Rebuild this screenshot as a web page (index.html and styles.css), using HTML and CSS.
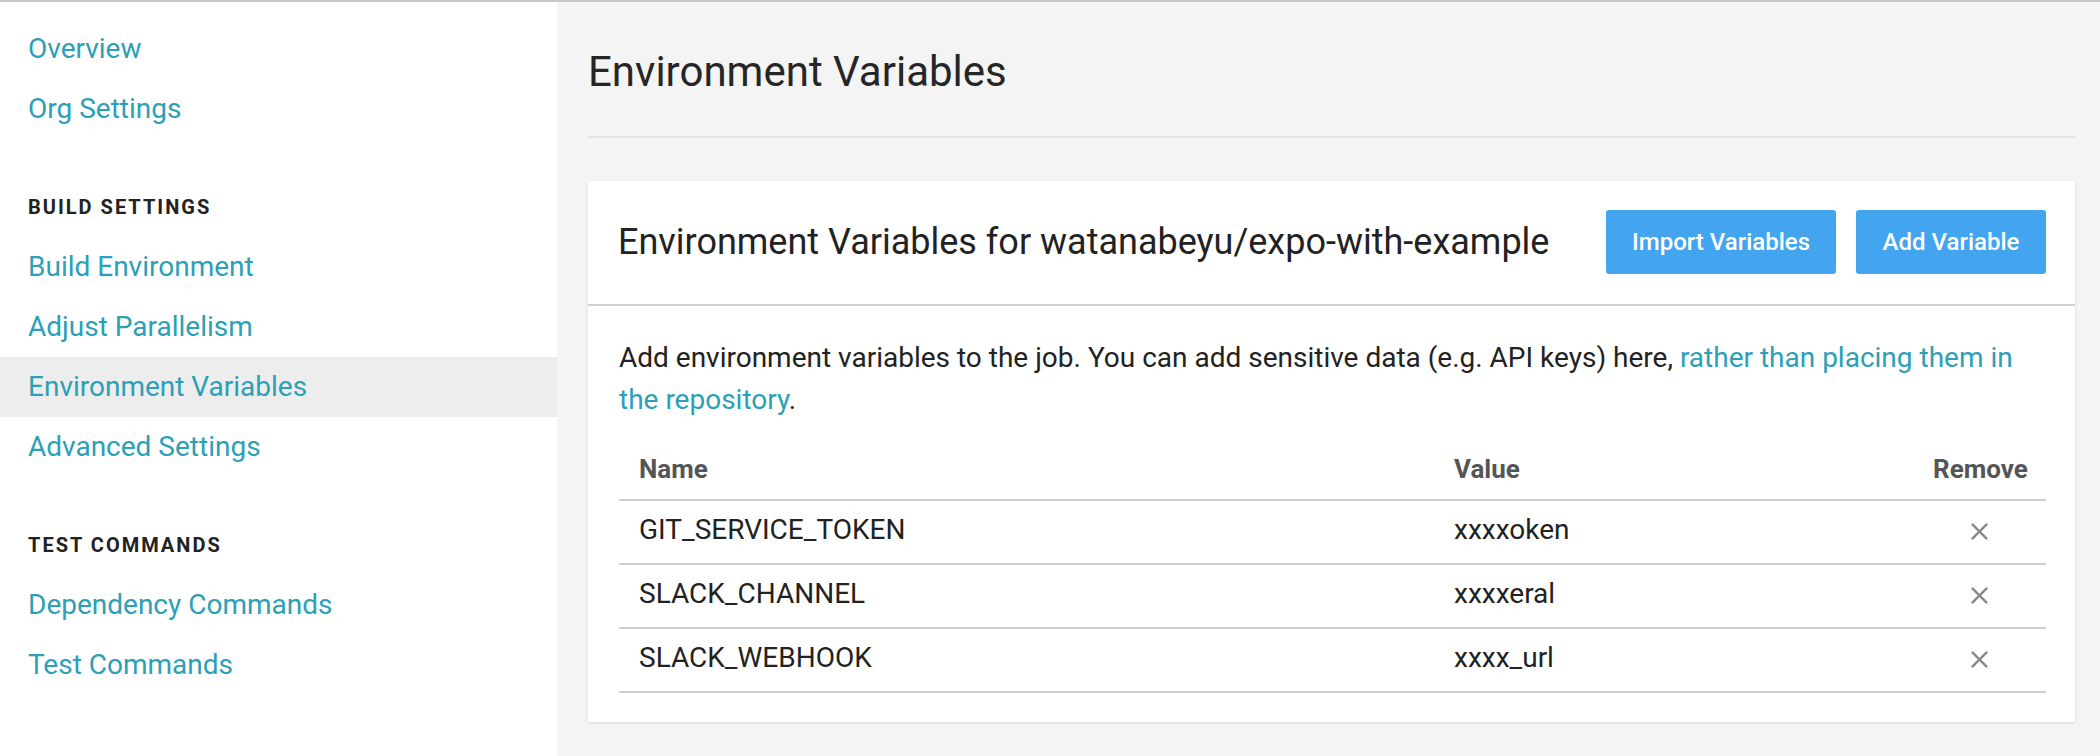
FILE: index.html
```html
<!DOCTYPE html>
<html lang="en">
<head>
<meta charset="utf-8">
<title>Environment Variables</title>
<link rel="stylesheet" href="styles.css">
</head>
<body>
<div class="page">
  <aside class="sidebar">
    <nav class="nav-group">
      <a class="nav-item" href="#">Overview</a>
      <a class="nav-item" href="#">Org Settings</a>
    </nav>
    <div class="nav-heading">BUILD SETTINGS</div>
    <nav class="nav-group">
      <a class="nav-item" href="#">Build Environment</a>
      <a class="nav-item" href="#">Adjust Parallelism</a>
      <a class="nav-item active" href="#">Environment Variables</a>
      <a class="nav-item" href="#">Advanced Settings</a>
    </nav>
    <div class="nav-heading">TEST COMMANDS</div>
    <nav class="nav-group">
      <a class="nav-item" href="#">Dependency Commands</a>
      <a class="nav-item" href="#">Test Commands</a>
    </nav>
  </aside>
  <main class="main">
    <h1 class="page-title">Environment Variables</h1>
    <hr class="divider">
    <section class="card">
      <header class="card-header">
        <h2 class="card-title">Environment Variables for watanabeyu/expo-with-example</h2>
        <div class="actions">
          <button class="btn btn-import">Import Variables</button>
          <button class="btn btn-add">Add Variable</button>
        </div>
      </header>
      <div class="card-body">
        <p class="intro">Add environment variables to the job. You can add sensitive data (e.g. API keys) here, <a href="#" class="link">rather than placing them in the repository</a>.</p>
        <table class="vars">
          <colgroup>
            <col class="col-name">
            <col class="col-value">
            <col class="col-remove">
          </colgroup>
          <thead>
            <tr><th>Name</th><th>Value</th><th class="center">Remove</th></tr>
          </thead>
          <tbody>
            <tr><td>GIT_SERVICE_TOKEN</td><td>xxxxoken</td><td class="center"><span class="remove"><svg viewBox="0 0 20 20" width="19" height="19"><path d="M2 2L18 18M18 2L2 18" stroke="#888" stroke-width="2.5" fill="none"/></svg></span></td></tr>
            <tr><td>SLACK_CHANNEL</td><td>xxxxeral</td><td class="center"><span class="remove"><svg viewBox="0 0 20 20" width="19" height="19"><path d="M2 2L18 18M18 2L2 18" stroke="#888" stroke-width="2.5" fill="none"/></svg></span></td></tr>
            <tr><td>SLACK_WEBHOOK</td><td>xxxx_url</td><td class="center"><span class="remove"><svg viewBox="0 0 20 20" width="19" height="19"><path d="M2 2L18 18M18 2L2 18" stroke="#888" stroke-width="2.5" fill="none"/></svg></span></td></tr>
          </tbody>
        </table>
      </div>
    </section>
  </main>
</div>
</body>
</html>
```

FILE: styles.css
```css
* { box-sizing: border-box; }
html, body { margin: 0; padding: 0; }
body {
  font-family: Roboto, "Liberation Sans", sans-serif;
  color: #222;
  background: #f4f4f4;
}
.page {
  display: flex;
  border-top: 2px solid #c8c8c8;
  height: 756px;
}
.sidebar {
  width: 557px;
  flex: none;
  background: #fff;
  padding-top: 17px;
}
.nav-group { display: flex; flex-direction: column; }
.nav-item {
  display: block;
  height: 60px;
  line-height: 60px;
  padding-left: 28px;
  font-size: 28px;
  color: #2ba0b7;
  text-decoration: none;
}
.nav-item.active { background: #ededed; }
.nav-heading {
  margin: 56px 0 18px;
  padding-left: 28px;
  font-size: 20px;
  line-height: 24px;
  font-weight: 700;
  letter-spacing: 2px;
  color: #222;
}
.main {
  flex: 1;
  padding: 45px 25px 0 31px;
  background: #f4f4f4;
}
.page-title {
  margin: 0;
  font-size: 42px;
  line-height: 50px;
  font-weight: 400;
  color: #262626;
}
.divider {
  margin: 39px 0 0;
  border: 0;
  border-top: 2px solid #e2e2e2;
}
.card {
  margin-top: 43px;
  background: #fff;
  box-shadow: 0 1px 3px rgba(0,0,0,0.12);
}
.card-header {
  display: flex;
  align-items: center;
  justify-content: space-between;
  padding: 29px 29px 30px 30px;
  border-bottom: 2px solid #d0d0d0;
}
.card-title {
  margin: 0;
  font-size: 36px;
  font-weight: 400;
  color: #222;
  white-space: nowrap;
}
.actions { display: flex; gap: 20px; flex: none; }
.btn {
  height: 64px;
  border: 0;
  border-radius: 3px;
  background: #43a5ef;
  color: #fff;
  font-family: Roboto, "Liberation Sans", sans-serif;
  font-size: 24px;
  font-weight: 500;
  padding: 0;
  white-space: nowrap;
}
.btn-import { width: 230px; }
.btn-add { width: 190px; }
.card-body { padding: 31px 29px 29px 31px; }
.intro {
  margin: 0;
  font-size: 28px;
  line-height: 42px;
  color: #222;
}
.link { color: #2ba0b7; text-decoration: none; }
.vars {
  margin-top: 18px;
  width: 100%;
  border-collapse: collapse;
  table-layout: fixed;
}
.col-name { width: 815px; }
.col-value { width: 479px; }
.col-remove { width: 133px; }
.vars th {
  text-align: left;
  font-size: 26px;
  font-weight: 700;
  color: #555;
  line-height: 30px;
  padding: 15px 20px;
  border-bottom: 2px solid #cfcfcf;
}
.vars td {
  font-size: 28px;
  line-height: 26px;
  padding: 16px 20px 20px;
  border-bottom: 2px solid #cfcfcf;
  color: #222;
}
.vars .center { text-align: center; }
.remove { display: inline-flex; vertical-align: middle; }
```
